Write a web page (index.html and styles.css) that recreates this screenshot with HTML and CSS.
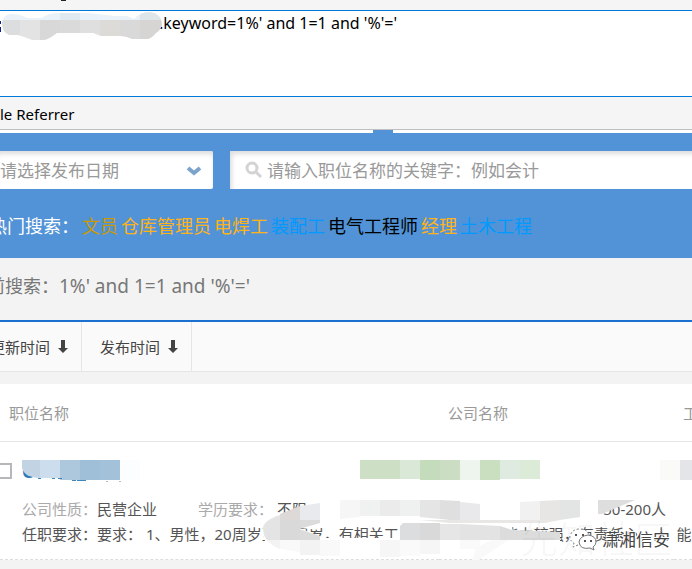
FILE: index.html
```html
<!DOCTYPE html>
<html lang="zh-CN">
<head>
    <meta charset="UTF-8">
    <meta name="viewport" content="width=device-width, initial-scale=1.0">
    <title>职位搜索</title>
    <link rel="stylesheet" href="styles.css">
</head>
<body>
<section class="tool">
    <div class="strip"><span></span></div>
    <div class="url">
        <textarea aria-label="URL" spellcheck="false">.keyword=1%' and 1=1 and '%'='</textarea>
        <svg class="smear" width="164" height="30" viewBox="0 12 164 30" aria-hidden="true">
            <clipPath id="blob"><path d="M2 23Q3 14 12 14Q20 14 27 18H42Q48 13 58 13H88L115 16H127L134 19Q140 12 150 12Q162 14 162 25Q160 31 156 33Q151 39 147 39H132Q126 36 120 36H101L93 33H57Q48 40 44 40H32Q28 38 18 35H9Q2 32 2 23Z"/></clipPath>
            <path d="M0 21h1v3h-1zM0 27h1v5h-1z" fill="#10208a"/>
            <g clip-path="url(#blob)">
                <rect y="12" width="164" height="8" fill="#e9f1f9"/>
                <rect x="60" y="12" width="20" height="8" fill="#dfe9f0"/>
                <rect x="140" y="12" width="24" height="8" fill="#dfe6ea"/>
                <rect y="20" width="20" height="22" fill="#dcdddf"/>
                <rect x="20" y="20" width="20" height="22" fill="#e3e3e3"/>
                <rect x="40" y="20" width="20" height="22" fill="#d8d8d8"/>
                <rect x="60" y="20" width="20" height="22" fill="#dadada"/>
                <rect x="80" y="20" width="20" height="22" fill="#dfdfdf"/>
                <rect x="100" y="20" width="20" height="22" fill="#dcdbd8"/>
                <rect x="120" y="20" width="20" height="22" fill="#d9d9da"/>
                <rect x="140" y="20" width="24" height="22" fill="#d7d5d3"/>
            </g>
        </svg>
    </div>
    <div class="referrer">le Referrer</div>
</section>

<section class="search">
    <i class="notch"></i>
    <form class="fields">
        <div class="date">
            <select aria-label="发布日期"><option>请选择发布日期</option></select>
            <svg width="16" height="12" viewBox="0 0 16 12" aria-hidden="true"><path d="M2 3L8 8L14 3" fill="none" stroke="#7ba3cc" stroke-width="4"/></svg>
        </div>
        <div class="keyword">
            <svg width="18" height="18" viewBox="0 0 18 18" aria-hidden="true"><circle cx="7" cy="7" r="5" fill="none" stroke="#d3d3d3" stroke-width="3"/><path d="M11 11L16 16" stroke="#d3d3d3" stroke-width="3"/></svg>
            <input type="text" aria-label="关键字" placeholder="请输入职位名称的关键字：例如会计">
        </div>
    </form>
    <div class="hot">
        <span>热门搜索：</span>
        <a href="#" class="brown">文员</a>
        <a href="#" class="orange">仓库管理员</a>
        <a href="#" class="orange">电焊工</a>
        <a href="#" class="blue">装配工</a>
        <a href="#" class="black">电气工程师</a>
        <a href="#" class="orange">经理</a>
        <a href="#" class="blue">土木工程</a>
    </div>
</section>

<h1 class="current">前搜索：<span>1%' and 1=1 and '%'='</span></h1>

<nav class="sort">
    <a href="#">更新时间 <svg width="10" height="14" viewBox="0 0 10 14" aria-hidden="true"><path d="M3 0H7V8H10L5 13L0 8H3Z" fill="#444"/></svg></a>
    <a href="#">发布时间 <svg width="10" height="14" viewBox="0 0 10 14" aria-hidden="true"><path d="M3 0H7V8H10L5 13L0 8H3Z" fill="#444"/></svg></a>
</nav>

<main class="list">
    <table>
        <thead>
            <tr><th class="job">职位名称</th><th class="company">公司名称</th><th>工</th></tr>
        </thead>
        <tbody>
            <tr>
                <td colspan="3">
                    <div class="title"><input type="checkbox" aria-label="C"><a href="#">C</a></div>
                    <div class="info">
                        <p><span>公司性质：</span>民营企业</p>
                        <p><span>学历要求：</span> 不限</p>
                        <p class="size">50-200人</p>
                    </div>
                    <p class="need">任职要求：要求： 1、男性，20周岁至30周岁，有相关工作经验者优先，能力较强，有责任心，人&nbsp; 能</p>
                </td>
            </tr>
        </tbody>
    </table>
    <svg class="mosaic" width="692" height="127" viewBox="0 442 692 127" aria-hidden="true">
        <!-- title -->
        <path d="M22 460H40V478Q24 477 22 468Z" fill="#c2d3e4"/>
        <rect x="40" y="460" width="20" height="18" fill="#ccdded"/>
        <rect x="60" y="460" width="20" height="20" fill="#adc7dd"/>
        <rect x="80" y="460" width="20" height="20" fill="#9fbfd9"/>
        <rect x="100" y="460" width="20" height="20" fill="#a4c1da"/>
        <rect x="120" y="460" width="20" height="20" fill="#fbfdff"/>
        <path d="M38 478h3v1h-3zM52 478h3v1h-3zM58 478h4v1h-4zM72 480h4v1h-4zM77 480h9v1h-9z" fill="#3d86bd"/>
        <path d="M106 481h2v1h-2zM119 481h2v1h-2z" fill="#bbb"/>
        <!-- company -->
        <rect x="360" y="460" width="40" height="19" fill="#cddfc5"/>
        <rect x="400" y="460" width="20" height="19" fill="#d9e8d7"/>
        <rect x="420" y="460" width="20" height="20" fill="#c5dcbc"/>
        <rect x="440" y="460" width="20" height="20" fill="#cbddc3"/>
        <rect x="460" y="460" width="20" height="20" fill="#edf5ee"/>
        <rect x="480" y="460" width="20" height="20" fill="#cadec0"/>
        <rect x="500" y="460" width="20" height="19" fill="#dfeae1"/>
        <rect x="520" y="460" width="20" height="19" fill="#dcead8"/>
        <rect x="660" y="460" width="20" height="20" fill="#fafaf8"/>
        <rect x="680" y="460" width="12" height="20" fill="#e3e5e8"/>
        <!-- info -->
        <path d="M280 515L320 503V530L299 528L324 538V546H340V557H280Q262 545 263 530Q264 520 280 515Z" fill="#fff"/>
        <path d="M324 538H560V557H324Z" fill="#fff"/>
        <path d="M398 520H510L516 542H398Z" fill="#fff"/>
        <path d="M280 515L300 508V540H267Q263 535 263 528Q264 520 280 515Z" fill="#e4e4e4"/>
        <path d="M280 514L300 506V520H280Z" fill="#dcd9d8"/>
        <path d="M300 506L320 503V520H300Z" fill="#e8eaed"/>
        <path d="M280 520H300V540H280Z" fill="#d9d9da"/>
        <path d="M300 520H320V523L299 529L320 536V540H300Z" fill="#dadbda"/>
        <path d="M267 540H280V549Q272 546 267 540ZM300 540H320V555H300Z" fill="#f3f3f3"/>
        <path d="M280 540H300V552L280 549ZM320 540H340V556H320Z" fill="#f9f9f9"/>
        <path d="M340 500H360V517L340 519Z" fill="#f6f6f7"/>
        <path d="M360 500H380V516H360Z" fill="#f0f2f2"/>
        <path d="M380 500H400V516H380Z" fill="#ebebeb"/>
        <path d="M400 500H420V516H400Z" fill="#eff0f0"/>
        <path d="M420 500H440V519L420 517Z" fill="#e6e5e5"/>
        <path d="M440 500L460 501V521L440 519Z" fill="#dfdfdf"/>
        <path d="M460 502L480 504V520H460Z" fill="#e9e9eb"/>
        <path d="M520 502L540 501V520H520Z" fill="#f1f1f1"/>
        <path d="M540 501L560 500V520H540Z" fill="#e7e6e5"/>
        <path d="M560 500H580V517L560 520Z" fill="#e3e5e4"/>
        <path d="M598 500H635L602 514H598Z" fill="#dedede"/>
        <path d="M420 520H560L545 523H450Z" fill="#e8e7e5"/>
        <!-- requirements -->
        <path d="M400 540V526L403 523H440V540Z" fill="#dcddde"/>
        <rect x="420" y="523" width="20" height="17" fill="#d9d9d9"/>
        <rect x="440" y="524" width="20" height="16" fill="#e6e6e6"/>
        <path d="M460 524L500 526V540H460Z" fill="#e3e3e3"/>
        <path d="M500 526L512 530L560 532V540H500Z" fill="#dcdcdc"/>
        <path d="M380 540H400V557H380ZM420 540H440V554H420Z" fill="#f6f6f6"/>
        <path d="M400 540H420V556H400ZM460 540H480V549H460Z" fill="#fafafa"/>
        <path d="M492 540H508L470 566L476 548Z" fill="#f9f9f9"/>
    </svg>
    <div class="brand">先知社区</div>
    <div class="mark">
        <svg width="28" height="24" viewBox="0 0 28 24" aria-hidden="true">
            <path d="M9 17L4 19L5 15Q0 12 1 8Q3 1 11 1Q19 1 20 8" fill="#fff" stroke="#777" stroke-dasharray="2 2"/>
            <path d="M19 7Q27 8 27 14Q27 17 24 19L25 22L21 20Q11 22 10 14Q11 8 19 7Z" fill="#fff" stroke="#777"/>
            <path d="M6 6h2v2h-2zM13 6h2v2h-2zM15 12h2v2h-2zM21 12h2v2h-2z" fill="#555"/>
        </svg>
        <span>潇湘信安</span>
    </div>
</main>
</body>
</html>
```

FILE: styles.css
```css
* {margin:0; padding:0; box-sizing:border-box;}
body {background:#f3f3f3; font-family:"Noto Sans","Noto Sans CJK SC",sans-serif; font-size:15px; color:#555; overflow:hidden;}
a {color:inherit; text-decoration:none;}
input, select, textarea {font:inherit; border:0; outline:0; border-radius:0;}

.tool {background:#f5f5f5; color:#000; border-bottom:1px solid #bfbfbf;}
.strip {height:10px; padding-left:61px;}
.strip span {display:block; width:5px; height:1px; background:#222;}
.url {position:relative; height:87px; background:#fff; border:solid #0078d7; border-width:1px 0;}
.url textarea {display:block; width:100%; height:100%; padding:0 0 0 159px; font-size:16px; line-height:24px; resize:none; background:none; color:#000;}
.smear {position:absolute; left:0; top:1px;}
.referrer {height:32px; line-height:34px; font-size:15px;}

.search {position:relative; margin-top:3px; height:125px; padding-top:18px; background:#5193d6;}
.notch {position:absolute; left:373px; top:-3px; width:20px; height:3px; background:#5193d6;}
.tool + .search {box-shadow:0 -3px #fff;}
.fields {display:flex; gap:17px; height:38px;}
.date {position:relative; width:213px;}
.date select {display:block; width:100%; height:38px; appearance:none; background:#fff; color:#999; font-size:17px; box-shadow:inset -1px 5px 5px -2px #ddd; border-radius:0 2px 2px 0;}
.date svg {position:absolute; right:11px; top:14px;}
.keyword {flex:1; display:flex; align-items:center; gap:4px; padding-left:15px; background:#fff; box-shadow:inset 4px 5px 5px -2px #ddd;}
.keyword input {flex:1; min-width:0; font-size:17px; background:none;}
.keyword input::placeholder {color:#999;}
.hot {display:flex; gap:3px; margin-left:-11px; padding-top:24px; font-size:18px; line-height:26px; color:#fff; white-space:nowrap;}
.hot .brown {color:#c90;}
.hot .orange {color:#ffb31a;}
.hot .blue {color:#09f;}
.hot .black {color:#000;}

.current {height:62px; margin-left:-13px; font-size:18px; font-weight:normal; line-height:56px; color:#777;}
.current span {font-size:19px;}

.sort {display:flex; height:52px; border-top:2px solid #1b6fd0; border-bottom:1px solid #e5e5e5; background:#fafafa;}
.sort a {display:flex; align-items:center; gap:8px; padding:0 13px 0 18px; border-right:1px solid #e5e5e5; color:#444;}
.sort a:first-child {margin-left:-28px;}

.list {position:relative; margin-top:12px; background:#fff; box-shadow:0 20px #fafafa;}
table {width:100%; border-collapse:collapse; table-layout:fixed;}
th {height:57px; padding-left:9px; border-bottom:1px solid #e5e5e5; text-align:left; font-weight:normal; color:#999; overflow:hidden; white-space:nowrap;}
.job {width:439px;}
.company {width:235px;}
td {height:118px; padding:16px 0 12px; border-bottom:1px dashed #ddd; vertical-align:top; white-space:nowrap; overflow:hidden;}
.title {display:flex; align-items:center; gap:10px; height:26px; margin-left:-4px; margin-bottom:13px;}
.title input {appearance:none; width:16px; height:16px; border:2px solid #b5b8bb; background:#fff;}
.title a {font-size:18px; font-weight:bold; color:#2b7ab8;}
.info {display:flex; gap:41px; padding-left:22px; line-height:25px;}
.info span {color:#aaa;}
.size {margin-left:auto; margin-right:26px;}
.need {padding-left:22px; line-height:25px;}
.mosaic {position:absolute; left:0; top:58px;}
.brand {position:absolute; right:20px; bottom:0; font-size:38px; line-height:44px; color:rgba(0,0,0,.03);}
.mark {position:absolute; right:22px; bottom:5px; display:flex; align-items:center; gap:5px; color:#444;}
.mark span {font-size:17px; line-height:30px; text-shadow:0 0 1px #fff, 1px 1px #fff, -1px -1px #fff;}
```
